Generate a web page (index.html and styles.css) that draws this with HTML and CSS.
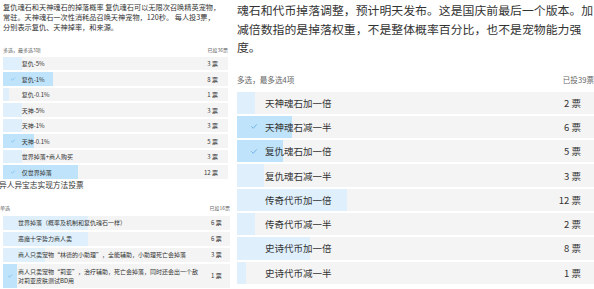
FILE: index.html
```html
<!DOCTYPE html>
<html lang="zh-CN">
<head>
<meta charset="utf-8">
<link rel="stylesheet" href="styles.css">
</head>
<body>
<div class="page">
  <section class="left">
    <p class="intro-s">复仇魂石和天神魂石的掉落概率 复仇魂石可以无限次召唤精英宠物，<br>常驻。天神魂石一次性消耗品召唤天神宠物，120秒。 每人投3票，<br>分别表示复仇、天神掉率，和来源。</p>
    <div class="meta-s p1"><span>多选，最多选3项</span><span>已投36票</span></div>
    <div class="rows-s p1">
      <div class="row-s"><div class="bar" style="width:8.3%"></div><span class="ck"></span><span class="lab">复仇-5%</span><span class="cnt">3 票</span></div>
      <div class="row-s on"><div class="bar" style="width:22.2%"></div><span class="ck"><svg viewBox="0 0 10 8"><path d="M1 4.2L3.8 7L9 1"/></svg></span><span class="lab">复仇-1%</span><span class="cnt">8 票</span></div>
      <div class="row-s"><div class="bar" style="width:2.8%"></div><span class="ck"></span><span class="lab">复仇-0.1%</span><span class="cnt">1 票</span></div>
      <div class="row-s"><div class="bar" style="width:8.3%"></div><span class="ck"></span><span class="lab">天神-5%</span><span class="cnt">3 票</span></div>
      <div class="row-s"><div class="bar" style="width:8.3%"></div><span class="ck"></span><span class="lab">天神-1%</span><span class="cnt">3 票</span></div>
      <div class="row-s on"><div class="bar" style="width:13.9%"></div><span class="ck"><svg viewBox="0 0 10 8"><path d="M1 4.2L3.8 7L9 1"/></svg></span><span class="lab">天神-0.1%</span><span class="cnt">5 票</span></div>
      <div class="row-s"><div class="bar" style="width:8.3%"></div><span class="ck"></span><span class="lab">世界掉落+商人购买</span><span class="cnt">3 票</span></div>
      <div class="row-s on"><div class="bar" style="width:33.3%"></div><span class="ck"><svg viewBox="0 0 10 8"><path d="M1 4.2L3.8 7L9 1"/></svg></span><span class="lab">仅世界掉落</span><span class="cnt">12 票</span></div>
    </div>
    <h2 class="title-s">异人异宝志实现方法投票</h2>
    <div class="meta-s p2"><span>单选</span><span>已投16票</span></div>
    <div class="rows-s p2">
      <div class="row-s"><div class="bar" style="width:37.5%"></div><span class="ck"></span><span class="lab">世界掉落（概率及机制和复仇魂石一样）</span><span class="cnt">6 票</span></div>
      <div class="row-s"><div class="bar" style="width:37.5%"></div><span class="ck"></span><span class="lab">恶魔十字势力商人卖</span><span class="cnt">6 票</span></div>
      <div class="row-s"><div class="bar" style="width:18.75%"></div><span class="ck"></span><span class="lab">商人只卖宠物“林德的小助理”，全能辅助，小助理死亡会掉落</span><span class="cnt">3 票</span></div>
      <div class="row-s on tall"><div class="bar" style="width:6.25%"></div><span class="ck"><svg viewBox="0 0 10 8"><path d="M1 4.2L3.8 7L9 1"/></svg></span><span class="lab">商人只卖宠物“莉亚”，治疗辅助，死亡会掉落，同时还会出一个敌<br>对莉亚皮肤测试BD用</span><span class="cnt">1 票</span></div>
    </div>
  </section>
  <section class="right">
    <p class="intro-l">魂石和代币掉落调整，预计明天发布。这是国庆前最后一个版本。加<br>减倍数指的是掉落权重，不是整体概率百分比，也不是宠物能力强<br>度。</p>
    <div class="meta-l"><span>多选，最多选4项</span><span>已投39票</span></div>
    <div class="rows-l">
      <div class="row-l"><div class="bar" style="width:5.13%"></div><span class="ck"></span><span class="lab">天神魂石加一倍</span><span class="cnt">2 票</span></div>
      <div class="row-l on"><div class="bar" style="width:15.38%"></div><span class="ck"><svg viewBox="0 0 10 8"><path d="M1 4.2L3.8 7L9 1"/></svg></span><span class="lab">天神魂石减一半</span><span class="cnt">6 票</span></div>
      <div class="row-l on"><div class="bar" style="width:12.82%"></div><span class="ck"><svg viewBox="0 0 10 8"><path d="M1 4.2L3.8 7L9 1"/></svg></span><span class="lab">复仇魂石加一倍</span><span class="cnt">5 票</span></div>
      <div class="row-l"><div class="bar" style="width:7.69%"></div><span class="ck"></span><span class="lab">复仇魂石减一半</span><span class="cnt">3 票</span></div>
      <div class="row-l"><div class="bar" style="width:30.77%"></div><span class="ck"></span><span class="lab">传奇代币加一倍</span><span class="cnt">12 票</span></div>
      <div class="row-l"><div class="bar" style="width:5.13%"></div><span class="ck"></span><span class="lab">传奇代币减一半</span><span class="cnt">2 票</span></div>
      <div class="row-l"><div class="bar" style="width:20.51%"></div><span class="ck"></span><span class="lab">史诗代币加一倍</span><span class="cnt">8 票</span></div>
      <div class="row-l"><div class="bar" style="width:2.56%"></div><span class="ck"></span><span class="lab">史诗代币减一半</span><span class="cnt">1 票</span></div>
    </div>
  </section>
</div>
</body>
</html>
```

FILE: styles.css
```css
html, body {
  margin: 0;
  padding: 0;
  background: #ffffff;
  overflow: hidden;
}
body {
  width: 594px;
  height: 289px;
  font-family: "Noto Sans CJK SC", "Noto Sans", sans-serif;
  color: #333333;
}
.page {
  display: flex;
  width: 594px;
  height: 289px;
  overflow: hidden;
}
.left {
  width: 232px;
  flex-shrink: 0;
  padding-top: 1.7px;
}
.right {
  width: 357px;
  flex-shrink: 0;
  margin-left: 5px;
  padding-top: 1.25px;
}
p, h2 {
  margin: 0;
  font-weight: normal;
}

/* small (left) panel */
.intro-s {
  font-size: 7.2px;
  line-height: 10px;
  margin-left: 3px;
  white-space: nowrap;
}
.meta-s {
  display: flex;
  justify-content: space-between;
  font-size: 5px;
  line-height: 8px;
  color: #666666;
}
.meta-s.p1 {
  margin: 14.3px 4px 3px 3px;
}
.meta-s.p2 {
  margin: 14px 2px 4px 0;
}
.rows-s {
  display: flex;
  flex-direction: column;
  gap: 2px;
}
.rows-s.p1 {
  margin-left: 3px;
  width: 225px;
}
.rows-s.p2 {
  margin-left: 2.7px;
  width: 227px;
}
.row-s {
  position: relative;
  display: flex;
  align-items: center;
  height: 13.5px;
  background: #f4f4f4;
  font-size: 6px;
  line-height: 9px;
}
.rows-s.p2 .row-s {
  height: 14px;
}
.rows-s.p2 .row-s.tall {
  height: 24px;
}
.row-s .ck {
  width: 4px;
  height: 4px;
  margin-left: 7.7px;
  margin-right: 7px;
}
.rows-s.p2 .row-s .ck {
  margin-left: 5.3px;
  margin-right: 6px;
}
.row-s .cnt {
  margin-left: auto;
  margin-right: 10px;
}
.rows-s.p2 .row-s .cnt {
  margin-right: 8px;
}
.title-s {
  font-size: 7.7px;
  line-height: 10px;
  margin-top: 1px;
  margin-left: -1px;
  color: #333333;
}

/* large (right) panel */
.intro-l {
  font-size: 11.88px;
  line-height: 18.5px;
  white-space: nowrap;
}
.meta-l {
  display: flex;
  justify-content: space-between;
  font-size: 7.6px;
  line-height: 10px;
  color: #666666;
  margin-top: 18.25px;
  margin-bottom: 6.5px;
}
.rows-l {
  display: flex;
  flex-direction: column;
  gap: 2px;
}
.row-l {
  position: relative;
  display: flex;
  align-items: center;
  height: 22.3px;
  background: #f4f4f4;
  font-size: 9.5px;
  line-height: 12px;
}
.row-l .ck {
  width: 6px;
  height: 5px;
  margin-left: 14px;
  margin-right: 8px;
}
.row-l .cnt {
  margin-left: auto;
  margin-right: 13px;
}

/* shared */
.bar {
  position: absolute;
  left: 0;
  top: 0;
  bottom: 0;
  background: #dff0fc;
}
.on .bar {
  background: #bfe3fa;
}
.ck, .lab, .cnt {
  position: relative;
}
.lab {
  white-space: nowrap;
}
.ck svg {
  display: block;
  width: 100%;
  height: 100%;
  overflow: visible;
}
.ck path {
  fill: none;
  stroke: #5aa9e6;
  stroke-width: 1.3;
  stroke-linecap: round;
  stroke-linejoin: round;
}
```
